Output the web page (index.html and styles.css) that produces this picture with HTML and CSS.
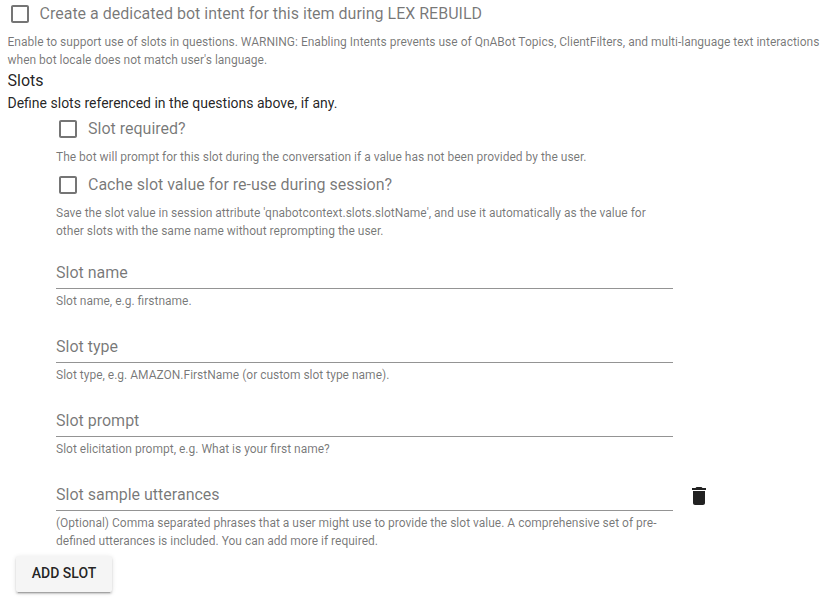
FILE: index.html
```html
<!DOCTYPE html>
<html lang="en">
<head>
<meta charset="utf-8">
<title>Slots</title>
<link rel="stylesheet" href="styles.css">
</head>
<body>
<main class="form">
  <label class="check"><svg class="box" viewBox="0 0 24 24"><path d="M19 5v14H5V5h14m0-2H5c-1.1 0-2 .9-2 2v14c0 1.1.9 2 2 2h14c1.1 0 2-.9 2-2V5c0-1.1-.9-2-2-2z"/></svg><span>Create a dedicated bot intent for this item during LEX REBUILD</span></label>
  <p class="hint intro">Enable to support use of slots in questions. WARNING: Enabling Intents prevents use of QnABot Topics, ClientFilters, and multi-language text interactions<br>when bot locale does not match user's language.</p>
  <h2 class="title">Slots</h2>
  <p class="subtitle">Define slots referenced in the questions above, if any.</p>
  <div class="row">
    <div class="fields">
      <label class="check"><svg class="box" viewBox="0 0 24 24"><path d="M19 5v14H5V5h14m0-2H5c-1.1 0-2 .9-2 2v14c0 1.1.9 2 2 2h14c1.1 0 2-.9 2-2V5c0-1.1-.9-2-2-2z"/></svg><span>Slot required?</span></label>
      <p class="hint">The bot will prompt for this slot during the conversation if a value has not been provided by the user.</p>
      <label class="check"><svg class="box" viewBox="0 0 24 24"><path d="M19 5v14H5V5h14m0-2H5c-1.1 0-2 .9-2 2v14c0 1.1.9 2 2 2h14c1.1 0 2-.9 2-2V5c0-1.1-.9-2-2-2z"/></svg><span>Cache slot value for re-use during session?</span></label>
      <p class="hint last">Save the slot value in session attribute 'qnabotcontext.slots.slotName', and use it automatically as the value for<br>other slots with the same name without reprompting the user.</p>
      <div class="field"><div class="input">Slot name</div><p class="hint">Slot name, e.g. firstname.</p></div>
      <div class="field"><div class="input">Slot type</div><p class="hint">Slot type, e.g. AMAZON.FirstName (or custom slot type name).</p></div>
      <div class="field"><div class="input">Slot prompt</div><p class="hint">Slot elicitation prompt, e.g. What is your first name?</p></div>
      <div class="field"><div class="input">Slot sample utterances</div><p class="hint">(Optional) Comma separated phrases that a user might use to provide the slot value. A comprehensive set of pre-<br>defined utterances is included. You can add more if required.</p></div>
    </div>
    <svg class="trash" viewBox="0 0 24 24"><path d="M6 19c0 1.1.9 2 2 2h8c1.1 0 2-.9 2-2V7H6v12zM19 4h-3.500l-1-1h-5l-1 1H5v2h14V4z"/></svg>
  </div>
  <button class="add">ADD SLOT</button>
</main>
</body>
</html>
```

FILE: styles.css
```css
* { box-sizing: border-box; }
body { margin: 0; background: #fff; font-family: Roboto, sans-serif; color: rgba(0,0,0,.87); }
p, h2 { margin: 0; }
.form { min-height: 100vh; padding: 2px 0 0 7.5px; }
.check { display: flex; align-items: center; height: 24px; gap: 8px; font-size: 16px; color: rgba(0,0,0,.54); white-space: nowrap; }
.check span { padding-bottom: 2px; }
.box { width: 24px; height: 24px; fill: currentColor; }
.hint { font-size: 12px; line-height: 18px; color: rgba(0,0,0,.54); white-space: nowrap; }
.intro { margin-top: 7px; }
.title { font-size: 16px; font-weight: 400; line-height: 24px; }
.subtitle { font-size: 14px; line-height: 20px; }
.row { display: flex; margin-left: 48.5px; }
.fields { width: 617px; }
.fields .check { margin-top: 4px; }
.fields > .hint { margin: 7px 0; }
.fields > .last { margin-bottom: 17px; }
.field { height: 74px; }
.field:last-child { height: 77px; }
.input { height: 32px; border-bottom: 1px solid rgba(0,0,0,.42); font-size: 16px; line-height: 32px; color: rgba(0,0,0,.54); }
.field .hint { padding-top: 3px; }
.trash { width: 24px; height: 24px; margin-left: 14px; margin-top: 371px; fill: rgba(0,0,0,.87); }
.add { display: block; margin: 0 0 0 8.5px; padding: 0 0 2px; width: 96px; height: 36px; border: 0; border-radius: 2px; background: #f5f5f5; font: 500 14px Roboto, sans-serif; color: rgba(0,0,0,.87); box-shadow: 0 3px 1px -2px rgba(0,0,0,.2), 0 2px 2px rgba(0,0,0,.14), 0 1px 5px rgba(0,0,0,.12); }
```
